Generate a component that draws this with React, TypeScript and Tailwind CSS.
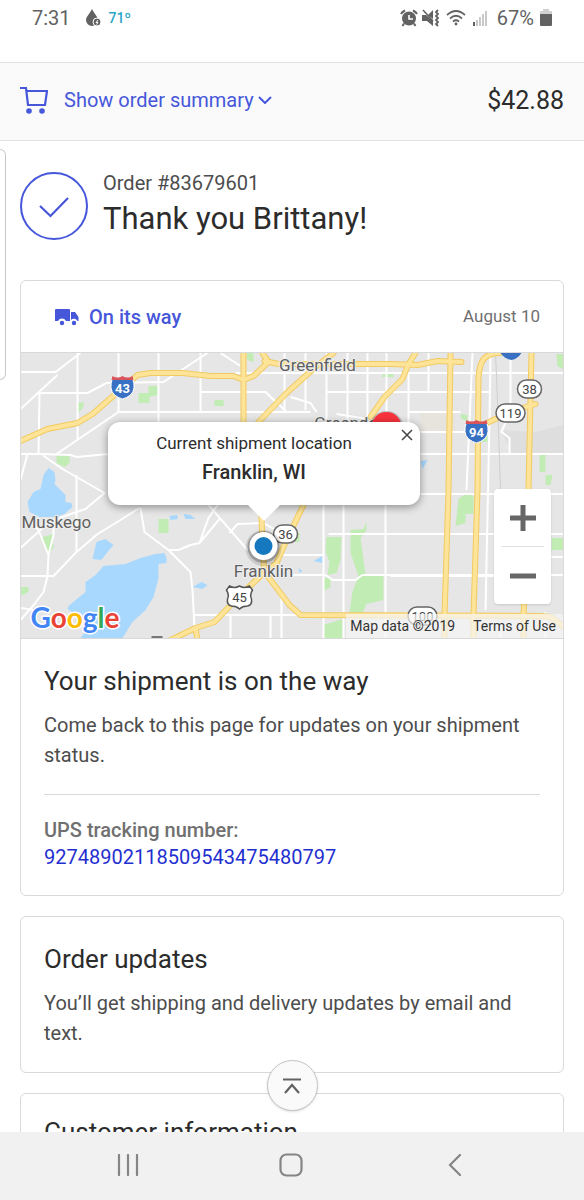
import React from 'react';

const WHITE_ROADS = [
  'M20 372H55L80 353M57 375L20 409M40 393H87L106 383L163 382L207 353M77 353V440M39 393L38 454M118 353V412L56 454',
  'M20 454H42L70 455L76 457L108 454M42 455L62 469L104 493L85 509L50 521L20 548M27 454L20 480M76 475V552',
  'M158 353V423M118 412H243M200 353V412M200 392H243M30 522L38 530L48 555L47 576L43 592L34 604L20 620M53 520V535L48 555M20 576H53L75 553L97 534L120 520L139 508M20 608L34 610',
  'M140 508L144 532L168 550L190 572L192 590L194 628M168 550H178L190 545L199 543L208 518L222 498M208 505L247 550M194 615H370M229 533L237 524L263 523L275 530M199 543L219 519',
  'M220 353L240 366M284 353V412M305 353V410M326 353V422M347 353V420M367 353V422M386 353V422M408 373V422M428 353V391',
  'M210 412H310M265 392L278 405M235 373H564M326 392H490M243 392H265L280 406L286 412M290 397L310 403L316 412M336 414L386 422M408 412H460M420 432H467M420 454H564M420 494H564',
  'M282 555H323M290 575H325L332 580H355L362 575H564M323 505V638M343 505V638M385 505V638M328 534H564M281 598V638M270 616V638M230 616V638',
  'M490 353L489 420L485 610M472 353L466 490M510 360V411L501 432L509 438V454M545 612V638M390 534H495M390 576H495M551 557H564M500 627V638',
];

const HIGHWAYS = [
  'M20 441L47 429L77 423L92 414L122 388L137 375L150 373H182L210 376H233L243 380L253 376L268 362L262 353',
  'M243 353V422',
  'M264 361L278 364H390L417 365L437 361L461 362',
  'M258 422L285 394L315 367L333 353',
  'M370 417L384 397L402 379L408 364L415 353',
  'M450 353L448 490L444 616V638',
  'M500 353C484 353 479 360 478 378L477 490L473 616V638',
  'M531 353L528 490L523 616V638',
  'M482 425L510 412L535 404',
  'M261 515L262 550L264 572L289 605L300 615L540 616L550 617L564 627',
  'M304 503L286 540L276 563L262 574L235 600L214 622L195 628L168 641M195 628L197 640',
];

const GOOGLE_LETTERS = [
  { char: 'G', color: '#4285f4' },
  { char: 'o', color: '#ea4335' },
  { char: 'o', color: '#fbbc05' },
  { char: 'g', color: '#4285f4' },
  { char: 'l', color: '#34a853' },
  { char: 'e', color: '#ea4335' },
];

const InterstateShield = ({ x, y, label }: { x: number; y: number; label: string }) => (
  <g transform={`translate(${x} ${y})`}>
    <path d="M-10 -10Q-5 -8 0 -11Q5 -8 10 -10Q14 1 8 7Q4 10 0 11Q-4 10 -8 7Q-14 1 -10 -10Z" fill="#3871c4" stroke="#fff" strokeWidth="1" />
    <path d="M-10 -12Q-5 -9 0 -12Q5 -9 10 -12L11 -8H-11Z" fill="#d9535a" />
    <text y="5" textAnchor="middle" fontSize="13" fontWeight="700" fill="#fff">{label}</text>
  </g>
);

const RouteBadge = ({ x, y, width, label }: { x: number; y: number; width: number; label: string }) => (
  <g transform={`translate(${x} ${y})`}>
    <rect x={-width / 2} y="-9" width={width} height="18" rx="9" fill="#fff" stroke="#666" strokeWidth="1.5" />
    <text y="5" textAnchor="middle" fontSize="13" fill="#444">{label}</text>
  </g>
);

const ShipmentMap = () => (
  <svg
    viewBox="20 353 543 285"
    preserveAspectRatio="xMidYMid slice"
    className="block h-full w-full font-['Roboto',sans-serif]"
    role="img"
    aria-label="Map of Franklin, WI"
  >
    <rect x="20" y="353" width="544" height="285" fill="#e6e6e6" />
    <path d="M420 412H455V432H420Z" fill="#e6e4dd" />
    <path d="M500 430L535 432L564 425V454H512Z" fill="#dedede" />

    {/* parks */}
    <g fill="#c1ecb4">
      <path d="M138 393H148V386H157V395L149 397V403H138ZM77 403L83 402V407L78 413ZM56 456L69 454V463L64 467L56 463ZM214 400H223V406H214ZM246 353H253V362L247 360ZM382 373H393V377H382Z" />
      <path d="M40 538L52 534L53 547L48 555ZM158 519H168V533H158ZM20 587H28V592L20 596ZM326 537H341L340 560L336 573L327 575L329 562L325 552ZM323 578H330V587L323 591ZM323 625L342 619V638H323Z" />
      <path d="M366 522V530L360 538L362 552L365 575H383V600L366 604L362 613H349L352 592L358 576L350 553V530L363 529ZM295 533H299V542H294Z" />
      <path d="M458 499L465 494L473 496V514H465V523L455 526ZM551 538H564V550H551ZM556 354H564V370L557 366ZM539 455H545V472H539ZM545 475H552L550 485H545ZM460 414L467 415V421L461 419ZM480 435H487V442H480ZM461 496L470 494L474 498Z" />
    </g>

    {/* lakes */}
    <g fill="#a9d8fe">
      <path d="M48 468L54 472L55 480L54 484L65 495V502L71 503L72 507L64 514L55 517H39L29 512L27 502L33 492L40 489L43 475Z" />
      <path d="M96 542L105 539L113 545L107 552L101 560L92 559Z" />
      <path d="M68 606L85 592V582L95 575L103 566L125 564L140 558L155 554L164 553L166 558V563L158 564V578L153 597L145 610L132 622L122 638H80L90 625L67 609Z" />
      <path d="M169 516L177 515V519L170 520ZM183 514L190 515L195 519H185ZM192 587L201 582L207 585L202 589ZM313 561L322 556V563ZM298 568L302 571L299 573ZM420 461L427 460L422 469Z" />
    </g>

    <g fill="none" stroke="#fff" strokeWidth="2" strokeLinejoin="round">
      {WHITE_ROADS.map((d) => <path key={d} d={d} />)}
    </g>
    <path d="M495 353L497 400L500 490" fill="none" stroke="#cfcfcf" strokeWidth="1" />
    <g fill="none" stroke="#f1ca62" strokeWidth="6" strokeLinejoin="round" strokeLinecap="round">
      {HIGHWAYS.map((d) => <path key={d} d={d} />)}
    </g>
    <g fill="none" stroke="#fde498" strokeWidth="4" strokeLinejoin="round" strokeLinecap="round">
      {HIGHWAYS.map((d) => <path key={d} d={d} />)}
    </g>

    <InterstateShield x={122} y={388} label="43" />
    <InterstateShield x={476} y={432} label="94" />
    <path d="M500 353H521Q517 359 511 360Q504 359 500 353Z" fill="#3871c4" />
    <RouteBadge x={529} y={389} width={24} label="38" />
    <RouteBadge x={510} y={413} width={29} label="119" />
    <RouteBadge x={285} y={534} width={24} label="36" />
    <RouteBadge x={422} y={616} width={29} label="100" />
    <g transform="translate(239 597)">
      <path d="M-10 -11Q-5 -8 0 -11Q5 -8 10 -11L13 -7Q10 -2 12 2Q13 8 8 9Q3 9 0 12Q-3 9 -8 9Q-13 8 -12 2Q-10 -2 -13 -7Z" fill="#fff" stroke="#555" strokeWidth="1.5" />
      <text y="5" textAnchor="middle" fontSize="13" fill="#444">45</text>
    </g>

    <g fontSize="17" fill="#5f5f5f" stroke="#efefef" strokeWidth="2" strokeLinejoin="round" paintOrder="stroke">
      <text x="317" y="371" textAnchor="middle">Greenfield</text>
      <text x="352" y="429" textAnchor="middle">Greendale</text>
      <text x="21" y="528">Muskego</text>
      <text x="263" y="577" textAnchor="middle">Franklin</text>
    </g>

    <g>
      <circle cx="386" cy="428" r="17" fill="#000" opacity="0.2" />
      <circle cx="386" cy="427" r="15" fill="#f8333c" />
      <circle cx="386" cy="427" r="5" fill="#fff" />
    </g>
    <g>
      <circle cx="263" cy="548" r="18" fill="#000" opacity="0.12" />
      <circle cx="263" cy="547" r="16" fill="#000" opacity="0.25" />
      <circle cx="263" cy="546" r="14" fill="#fff" />
      <circle cx="263" cy="546" r="9" fill="#1679bf" />
    </g>

    <path d="M151 637H162" stroke="#777" strokeWidth="2" />
    <text
      x="30"
      y="628"
      fontSize="28"
      fontWeight="700"
      stroke="#fff"
      strokeWidth="3"
      strokeLinejoin="round"
      paintOrder="stroke"
      className="font-['Lato',sans-serif]"
    >
      {GOOGLE_LETTERS.map((letter, index) => (
        <tspan key={index} fill={letter.color}>{letter.char}</tspan>
      ))}
    </text>
  </svg>
);

const StatusBar = () => (
  <div className="flex h-[62px] shrink-0 items-start justify-between bg-white px-8 pt-1 text-[#626262]">
    <div className="flex h-7 items-center">
      <span className="text-xl">7:31</span>
      <svg viewBox="0 0 16 18" className="ml-[14px] h-[18px] w-4" aria-hidden="true">
        <path d="M7 0C9 4 13 8 13 11A6 6 0 0 1 1 11C1 8 5 4 7 0Z" fill="#626262" />
        <circle cx="12" cy="13" r="4" fill="#626262" stroke="#fff" strokeWidth="1" />
        <path d="M13 11L11 13.500H13L11.500 15.500" fill="none" stroke="#fff" strokeWidth="1" />
      </svg>
      <span className="ml-2 text-sm font-medium text-[#28a5c8]">71º</span>
    </div>
    <div className="flex h-7 items-center">
      <svg viewBox="0 0 18 18" className="h-[18px] w-[18px]" fill="none" stroke="#626262" aria-hidden="true">
        <circle cx="9" cy="9.500" r="7" fill="#626262" stroke="none" />
        <path d="M9 6V10H13" stroke="#fff" strokeWidth="1.600" />
        <path d="M1 5Q2 3 5 1.500M17 5Q16 3 13 1.500M4 14.500L2.500 17M14 14.500L15.500 17" strokeWidth="2" />
      </svg>
      <svg viewBox="0 0 18 18" className="ml-1 h-[18px] w-[18px]" fill="#626262" aria-hidden="true">
        <path d="M0 6H4L11 12V17L5 12H0ZM11 1V10L6 6Z" />
        <path d="M1 1L11 12" stroke="#626262" strokeWidth="1.500" />
        <path d="M16 1L14 3L16 5L14 7L16 9L14 11L16 13L14 15L16 17" fill="none" stroke="#626262" strokeWidth="1.800" />
      </svg>
      <svg viewBox="0 0 20 16" className="ml-[6px] h-4 w-5" fill="none" stroke="#626262" strokeWidth="1.700" aria-hidden="true">
        <path d="M1 5Q10 -3 19 5M4 8.500Q10 3 16 8.500M7 11.500Q10 9 13 11.500" />
        <circle cx="10" cy="14" r="1.400" fill="#626262" stroke="none" />
      </svg>
      <svg viewBox="0 0 16 18" className="ml-[6px] h-[18px] w-4" strokeWidth="2" aria-hidden="true">
        <path d="M2 17V13" stroke="#626262" />
        <path d="M5 17V11M8 17V8M11 17V5M14 17V2" stroke="#c9c9c9" />
      </svg>
      <span className="ml-[9px] text-xl">67%</span>
      <svg viewBox="0 0 12 18" className="ml-[6px] h-[18px] w-3" aria-hidden="true">
        <path d="M3 0H9V2H12V6H0V2H3Z" fill="#d0d0d0" />
        <path d="M0 5H12V16Q12 17 11 17H1Q0 17 0 16Z" fill="#626262" />
      </svg>
    </div>
  </div>
);

const OrderSummaryBar = () => (
  <div className="flex h-[79px] shrink-0 items-center justify-between border-y border-[#e2e2e2] bg-[#fafafa] px-5 pb-0.5">
    <button type="button" className="flex items-center pb-0.5 text-[#4657da]">
      <svg viewBox="0 0 28 28" className="h-7 w-7" fill="none" stroke="currentColor" strokeWidth="2.200" aria-hidden="true">
        <path d="M0 2H6L8 19H25L27 5H6.500" />
        <circle cx="9" cy="25" r="2.800" fill="currentColor" stroke="none" />
        <circle cx="22" cy="25" r="2.800" fill="currentColor" stroke="none" />
      </svg>
      <span className="ml-4 text-xl">Show order summary</span>
      <svg viewBox="0 0 14 8" className="ml-1 h-2 w-[14px]" fill="none" stroke="currentColor" strokeWidth="2" aria-hidden="true">
        <path d="M1 1L7 7L13 1" />
      </svg>
    </button>
    <span className="text-[25px] text-[#2c2c2c]">$42.88</span>
  </div>
);

const NavBar = () => (
  <nav className="grid h-[68px] shrink-0 grid-cols-[1fr_72px_1fr] items-center bg-[#f1f1f1] pr-0.5 pb-0.5 text-[#858585]">
    <button type="button" aria-label="Recent apps" className="justify-self-center">
      <svg viewBox="0 0 22 22" className="h-[22px] w-[22px]" stroke="currentColor" strokeWidth="2.200" strokeLinecap="round">
        <path d="M2 1V21M11 1V21M20 1V21" />
      </svg>
    </button>
    <button type="button" aria-label="Home" className="justify-self-center">
      <svg viewBox="0 0 24 24" className="h-6 w-6" fill="none" stroke="currentColor" strokeWidth="2.200">
        <rect x="1.500" y="1.500" width="21" height="21" rx="6" />
      </svg>
    </button>
    <button type="button" aria-label="Back" className="justify-self-center">
      <svg viewBox="0 0 14 22" className="h-[22px] w-[14px]" fill="none" stroke="currentColor" strokeWidth="2.200" strokeLinecap="round">
        <path d="M12 1L2 11L12 21" />
      </svg>
    </button>
  </nav>
);

export default function App() {
  return (
    <div className="flex h-screen flex-col overflow-hidden bg-white font-['Roboto',sans-serif] text-[#4d4d4d]">
      <StatusBar />
      <OrderSummaryBar />

      <main className="relative min-h-0 flex-1 overflow-hidden px-5 pt-[29px]">
        <div className="absolute top-2 left-0 h-[231px] w-[6px] rounded-r-md border border-l-0 border-[#c9c9c9]" />

        <header className="flex items-center gap-[15px]">
          <svg viewBox="0 0 68 68" className="h-[68px] w-[68px]" fill="none" stroke="#4657da" strokeWidth="2" aria-hidden="true">
            <circle cx="34" cy="34" r="33" />
            <path d="M20 34L30.500 44L48 26" strokeWidth="2.200" />
          </svg>
          <div>
            <p className="text-xl leading-[26px]">Order #83679601</p>
            <h1 className="text-[31px] leading-[46px] text-[#2c2c2c]">Thank you Brittany!</h1>
          </div>
        </header>

        <section className="mt-[38px] overflow-hidden rounded-md border border-[#d9d9d9]">
          <div className="flex h-[72px] items-center justify-between border-b border-[#d9d9d9] pr-[23px] pl-[34px]">
            <div className="flex items-center gap-[10px] text-[#4657da]">
              <svg viewBox="0 0 24 18" className="h-[18px] w-6" fill="currentColor" aria-hidden="true">
                <path d="M1 1H14Q15 1 15 2V13H11A4.500 4.500 0 0 0 3 13H0V2Q0 1 1 1ZM16 4H20L23.500 9V13H22.500A4 4 0 0 0 16 12Z" />
                <circle cx="7" cy="15" r="2.200" />
                <circle cx="19" cy="15" r="2.200" />
              </svg>
              <h2 className="text-xl font-medium">On its way</h2>
            </div>
            <span className="text-[17px] text-[#707070]">August 10</span>
          </div>

          <div className="relative h-[286px] border-b border-[#d9d9d9]">
            <ShipmentMap />

            <div className="absolute top-[69px] left-[87px] h-[83px] w-[312px] rounded-xl bg-white pt-2 text-center text-[#2c2c2c] shadow-[0_2px_8px_rgba(0,0,0,0.4)]">
              <p className="pr-5 text-[17px] leading-[26px]">Current shipment location</p>
              <p className="pr-5 text-xl leading-8 font-medium">Franklin, WI</p>
              <button type="button" aria-label="Close" className="absolute top-[7px] right-[7px] flex">
                <svg viewBox="0 0 12 12" className="h-3 w-3" stroke="#444" strokeWidth="1.500">
                  <path d="M1 1L11 11M11 1L1 11" />
                </svg>
              </button>
              <svg viewBox="0 0 32 16" className="absolute top-full left-[140px] h-4 w-8" fill="#fff" aria-hidden="true">
                <path d="M0 0H32L16 16Z" />
              </svg>
            </div>

            <div className="absolute top-[136px] right-3 flex h-[115px] w-[57px] flex-col items-center rounded-sm bg-white text-[#666] shadow-sm">
              <button type="button" aria-label="Zoom in" className="flex w-full flex-1 items-center justify-center">
                <svg viewBox="0 0 26 26" className="h-[26px] w-[26px]" stroke="currentColor" strokeWidth="5">
                  <path d="M13 0V26M0 13H26" />
                </svg>
              </button>
              <div className="h-px w-[43px] bg-[#e2e2e2]" />
              <button type="button" aria-label="Zoom out" className="flex w-full flex-1 items-center justify-center">
                <svg viewBox="0 0 26 26" className="h-[26px] w-[26px]" stroke="currentColor" strokeWidth="5">
                  <path d="M0 13H26" />
                </svg>
              </button>
            </div>

            <div className="absolute right-0 bottom-0 flex h-6 items-center gap-[18px] bg-[#f5f5f5]/70 pr-[7px] pl-1 text-sm text-[#333]">
              <span>Map data ©2019</span>
              <a href="#terms">Terms of Use</a>
            </div>
          </div>

          <div className="px-[23px] py-6">
            <h2 className="text-[26px] leading-9 text-[#2c2c2c]">Your shipment is on the way</h2>
            <p className="mt-[11px] text-xl leading-[30px]">
              Come back to this page for updates on your shipment status.
            </p>
            <hr className="mt-6 border-[#d9d9d9]" />
            <h3 className="mt-[22px] text-xl leading-[27px] font-medium text-[#707070]">UPS tracking number:</h3>
            <a href="#tracking" className="block text-xl leading-[27px] text-[#1f2fd0]">92748902118509543475480797</a>
          </div>
        </section>

        <section className="mt-5 rounded-md border border-[#d9d9d9] px-[23px] py-6">
          <h2 className="text-[26px] leading-9 text-[#2c2c2c]">Order updates</h2>
          <p className="mt-[11px] text-xl leading-[30px]">You’ll get shipping and delivery updates by email and text.</p>
        </section>

        <section className="mt-5 rounded-md border border-[#d9d9d9] px-[23px] py-5">
          <h2 className="text-[26px] leading-9 text-[#2c2c2c]">Customer information</h2>
        </section>

        <div className="absolute inset-x-0 bottom-[21px] flex justify-center">
          <button
            type="button"
            aria-label="Back to top"
            className="flex h-[51px] w-[51px] items-center justify-center rounded-full border border-[#c4c4c4] bg-[#fafafa] shadow-sm"
          >
            <svg viewBox="0 0 18 16" className="h-4 w-[18px]" fill="none" stroke="#626262" strokeWidth="2.200">
              <path d="M0 1.500H18M2 15L9 7L16 15" />
            </svg>
          </button>
        </div>
      </main>

      <NavBar />
    </div>
  );
}
